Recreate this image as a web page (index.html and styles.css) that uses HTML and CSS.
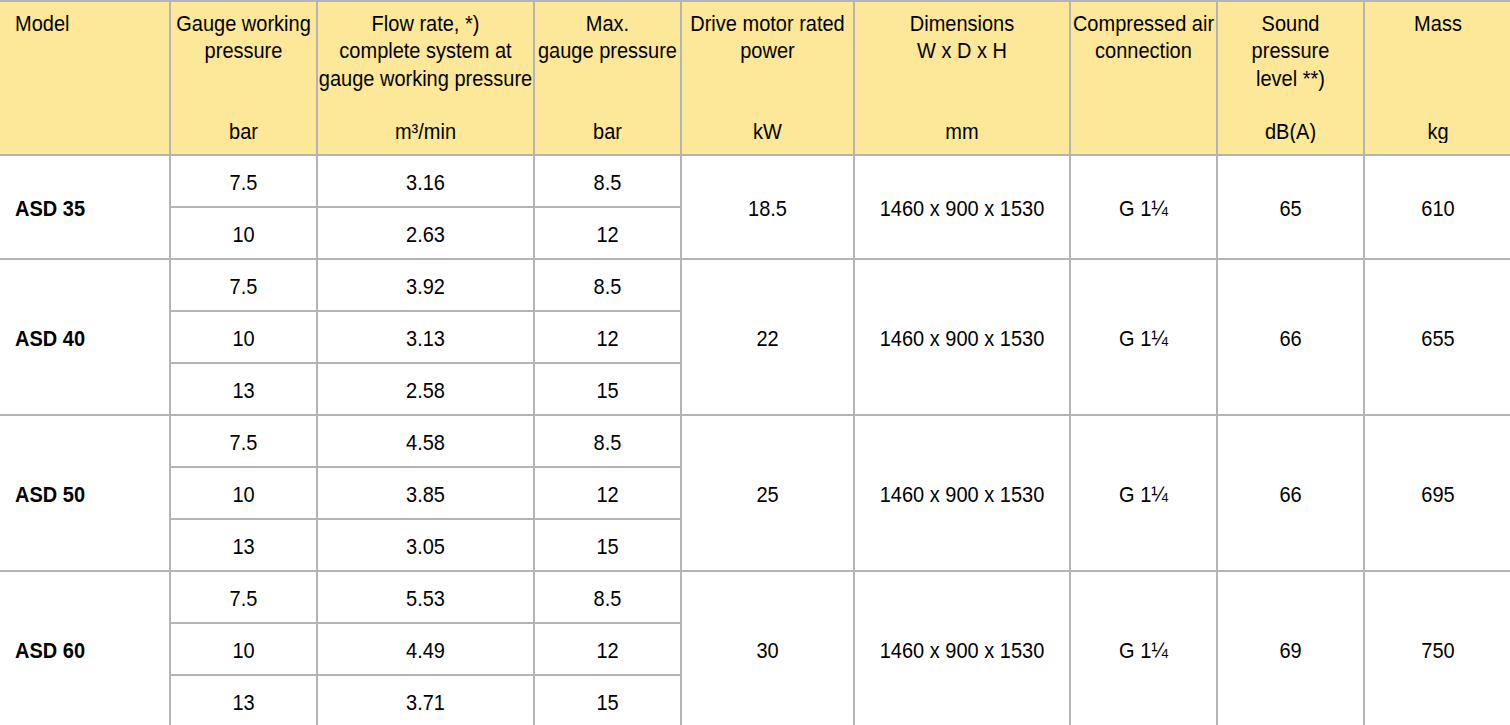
FILE: index.html
```html
<!DOCTYPE html>
<html>
<head>
<meta charset="utf-8">
<link rel="stylesheet" href="styles.css">
</head>
<body>
<table class="spec">
  <colgroup>
    <col class="c1"><col class="c2"><col class="c3"><col class="c4"><col class="c5"><col class="c6"><col class="c7"><col class="c8"><col class="c9">
  </colgroup>
  <thead>
    <tr>
      <th class="first"><div class="hd left"><span class="tx">Model</span><span class="unit"></span></div></th>
      <th><div class="hd"><span class="tx">Gauge working<br>pressure</span><span class="tx unit">bar</span></div></th>
      <th><div class="hd"><span class="tx">Flow rate, *)<br>complete system at<br>gauge working pressure</span><span class="tx unit">m³/min</span></div></th>
      <th><div class="hd"><span class="tx">Max.<br>gauge pressure</span><span class="tx unit">bar</span></div></th>
      <th><div class="hd"><span class="tx">Drive motor rated<br>power</span><span class="tx unit">kW</span></div></th>
      <th><div class="hd"><span class="tx">Dimensions<br>W x D x H</span><span class="tx unit">mm</span></div></th>
      <th><div class="hd"><span class="tx">Compressed air<br>connection</span><span class="unit"></span></div></th>
      <th><div class="hd"><span class="tx">Sound<br>pressure<br>level **)</span><span class="tx unit">dB(A)</span></div></th>
      <th class="last"><div class="hd"><span class="tx">Mass</span><span class="tx unit">kg</span></div></th>
    </tr>
  </thead>
  <tbody>
    <tr>
      <td rowspan="2" class="model"><span class="tx">ASD 35</span></td>
      <td><span class="tx">7.5</span></td><td><span class="tx">3.16</span></td><td><span class="tx">8.5</span></td>
      <td rowspan="2"><span class="tx">18.5</span></td><td rowspan="2"><span class="tx">1460 x 900 x 1530</span></td><td rowspan="2"><span class="tx">G 1¼</span></td><td rowspan="2"><span class="tx">65</span></td><td rowspan="2" class="last"><span class="tx">610</span></td>
    </tr>
    <tr><td><span class="tx">10</span></td><td><span class="tx">2.63</span></td><td><span class="tx">12</span></td></tr>

    <tr>
      <td rowspan="3" class="model"><span class="tx">ASD 40</span></td>
      <td><span class="tx">7.5</span></td><td><span class="tx">3.92</span></td><td><span class="tx">8.5</span></td>
      <td rowspan="3"><span class="tx">22</span></td><td rowspan="3"><span class="tx">1460 x 900 x 1530</span></td><td rowspan="3"><span class="tx">G 1¼</span></td><td rowspan="3"><span class="tx">66</span></td><td rowspan="3" class="last"><span class="tx">655</span></td>
    </tr>
    <tr><td><span class="tx">10</span></td><td><span class="tx">3.13</span></td><td><span class="tx">12</span></td></tr>
    <tr><td><span class="tx">13</span></td><td><span class="tx">2.58</span></td><td><span class="tx">15</span></td></tr>

    <tr>
      <td rowspan="3" class="model"><span class="tx">ASD 50</span></td>
      <td><span class="tx">7.5</span></td><td><span class="tx">4.58</span></td><td><span class="tx">8.5</span></td>
      <td rowspan="3"><span class="tx">25</span></td><td rowspan="3"><span class="tx">1460 x 900 x 1530</span></td><td rowspan="3"><span class="tx">G 1¼</span></td><td rowspan="3"><span class="tx">66</span></td><td rowspan="3" class="last"><span class="tx">695</span></td>
    </tr>
    <tr><td><span class="tx">10</span></td><td><span class="tx">3.85</span></td><td><span class="tx">12</span></td></tr>
    <tr><td><span class="tx">13</span></td><td><span class="tx">3.05</span></td><td><span class="tx">15</span></td></tr>

    <tr>
      <td rowspan="3" class="model"><span class="tx">ASD 60</span></td>
      <td><span class="tx">7.5</span></td><td><span class="tx">5.53</span></td><td><span class="tx">8.5</span></td>
      <td rowspan="3"><span class="tx">30</span></td><td rowspan="3"><span class="tx">1460 x 900 x 1530</span></td><td rowspan="3"><span class="tx">G 1¼</span></td><td rowspan="3"><span class="tx">69</span></td><td rowspan="3" class="last"><span class="tx">750</span></td>
    </tr>
    <tr><td><span class="tx">10</span></td><td><span class="tx">4.49</span></td><td><span class="tx">12</span></td></tr>
    <tr><td><span class="tx">13</span></td><td><span class="tx">3.71</span></td><td><span class="tx">15</span></td></tr>
  </tbody>
</table>
</body>
</html>
```

FILE: styles.css
```css
html, body {
  margin: 0;
  padding: 0;
  background: #ffffff;
}
body {
  font-family: "Liberation Sans", Arial, sans-serif;
  color: #000;
  overflow: hidden;
}
.spec {
  border-collapse: collapse;
  table-layout: fixed;
  width: 1511px;
  font-size: 20px;
}
.c1 { width: 170px; }
.c2 { width: 147px; }
.c3 { width: 217px; }
.c4 { width: 147px; }
.c5 { width: 173px; }
.c6 { width: 216px; }
.c7 { width: 147px; }
.c8 { width: 147px; }
.c9 { width: 147px; }

.spec th, .spec td {
  border: 2px solid #b4b4b4;
  padding: 0;
  text-align: center;
}
.spec th {
  background: #fde899;
  font-weight: normal;
  vertical-align: top;
}
.spec th.first, .spec td.model { border-left: none; }
.spec th.last, .spec td.last { border-right: none; }

.tx {
  display: inline-block;
  transform: scaleY(1.1);
}

.hd {
  display: flex;
  flex-direction: column;
  align-items: center;
  justify-content: space-between;
  height: 152px;
  box-sizing: border-box;
  padding: 8px 0 8px;
  line-height: 25px;
  white-space: nowrap;
}
.hd .tx { transform-origin: center top; }
.hd .unit { transform-origin: center center; }
.hd.left {
  align-items: flex-start;
  padding-left: 15px;
}
.unit { min-height: 27px; }

.spec td {
  height: 48px;
  padding-top: 2px;
  vertical-align: middle;
  line-height: 24px;
}
.spec td.model {
  text-align: left;
  padding-left: 15px;
  font-weight: bold;
}
```
